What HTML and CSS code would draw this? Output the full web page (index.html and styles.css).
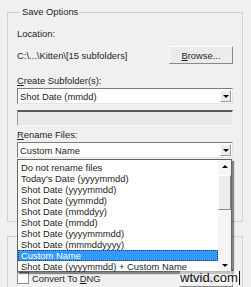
FILE: index.html
```html
<!DOCTYPE html>
<html lang="en">
<head>
    <meta charset="UTF-8">
    <title>Save Options</title>
    <link rel="stylesheet" href="styles.css">
</head>
<body>
    <fieldset class="group save-group">
        <legend>Save Options</legend>
        <div class="label loc-label">Location:</div>
        <div class="path-row">
            <span class="path">C:\...\Kitten\[15 subfolders]</span>
            <button class="btn browse"><u>B</u>rowse...</button>
        </div>
        <div class="label sub-label"><u>C</u>reate Subfolder(s):</div>
        <div class="combo">
            <span class="combo-text">Shot Date (mmdd)</span>
            <span class="combo-arrow"><span class="tri-down"></span></span>
        </div>
        <div class="disabled-box"></div>
        <div class="label rename-label"><u>R</u>ename Files:</div>
        <div class="combo rename-combo">
            <span class="combo-text">Custom Name</span>
            <span class="combo-arrow"><span class="tri-down"></span></span>
        </div>
    </fieldset>

    <fieldset class="group convert-group">
        <legend class="empty-legend"></legend>
        <div class="check-row">
            <span class="checkbox"></span>
            <span class="check-label">Convert To <u>D</u>NG</span>
            <button class="btn settings">Settings...</button>
        </div>
    </fieldset>

    <div class="droplist">
        <div class="items">
            <div class="item">Do not rename files</div>
            <div class="item">Today's Date (yyyymmdd)</div>
            <div class="item">Shot Date (yyyymmdd)</div>
            <div class="item">Shot Date (yymmdd)</div>
            <div class="item">Shot Date (mmddyy)</div>
            <div class="item">Shot Date (mmdd)</div>
            <div class="item">Shot Date (yyyymmmdd)</div>
            <div class="item">Shot Date (mmmddyyyy)</div>
            <div class="item selected">Custom Name</div>
            <div class="item">Shot Date (yyyymmdd) + Custom Name</div>
        </div>
        <div class="scrollbar">
            <span class="sb-btn"><span class="tri-up"></span></span>
            <span class="sb-thumb"></span>
            <span class="sb-track"></span>
            <span class="sb-btn"><span class="tri-down"></span></span>
        </div>
    </div>

    <span class="watermark">wtvid.com</span>
</body>
</html>
```

FILE: styles.css
```css
body {
    margin: 0;
    background-color: #f0f0f0;
    font-family: "Liberation Sans", Arial, sans-serif;
    font-size: 9.4px;
    color: #1e1e1e;
    width: 251px;
    height: 287px;
    overflow: hidden;
    position: relative;
}
.group {
    margin: 0 0 0 7px;
    width: 236px;
    box-sizing: border-box;
    border: 1px solid #d3d3d3;
    padding: 0 9px;
}
.group legend {
    padding: 0 2px;
    margin-left: 3px;
    line-height: 12px;
}
.empty-legend {
    width: 6px;
    height: 12px;
}
.save-group {
    margin-top: 6px;
    height: 216px;
}
.label {
    line-height: 13px;
}
.loc-label {
    margin-top: 9px;
}
.path-row {
    display: flex;
    align-items: center;
    justify-content: space-between;
    margin-top: 6px;
    height: 18px;
}
.btn {
    font-family: inherit;
    font-size: inherit;
    color: #1e1e1e;
    background: #ebebeb;
    border: 1px solid;
    border-color: #fcfcfc #8a8a8a #8a8a8a #fcfcfc;
    padding: 0;
}
.browse {
    width: 64px;
    height: 18px;
}
.sub-label {
    margin-top: 10px;
}
.combo {
    display: flex;
    align-items: center;
    justify-content: space-between;
    margin-top: 1px;
    height: 16px;
    box-sizing: border-box;
    background: #fff;
    border: 1px solid;
    border-color: #7c7c7c #e3e3e3 #e3e3e3 #7c7c7c;
    padding: 0 1px 0 2px;
}
.combo-arrow {
    display: flex;
    align-items: center;
    justify-content: center;
    width: 11px;
    height: 12px;
    box-sizing: border-box;
    background: #ececec;
    border: 1px solid;
    border-color: #fff #9a9a9a #9a9a9a #fff;
}
.tri-down {
    width: 0;
    height: 0;
    border-left: 3px solid transparent;
    border-right: 3px solid transparent;
    border-top: 3px solid #000;
}
.tri-up {
    width: 0;
    height: 0;
    border-left: 3px solid transparent;
    border-right: 3px solid transparent;
    border-bottom: 3px solid #000;
}
.disabled-box {
    margin-top: 6px;
    height: 16px;
    box-sizing: border-box;
    background: #e9e9e9;
    border: 1px solid;
    border-color: #5a5a5a #f4f4f4 #f4f4f4 #9a9a9a;
    border-top-width: 2px;
}
.rename-label {
    margin-top: 2px;
}
.convert-group {
    margin-top: 8px;
    height: 57px;
    border-bottom: none;
}
.check-row {
    display: flex;
    align-items: center;
    margin-top: 29px;
    height: 14px;
}
.checkbox {
    width: 12px;
    height: 12px;
    box-sizing: border-box;
    background: #fff;
    border: 1px solid #8e8f8f;
}
.check-label {
    margin-left: 3px;
    flex: 1;
}
.settings {
    width: 54px;
    height: 18px;
    color: #777;
}

/* open dropdown of the rename combo */
.droplist {
    position: absolute;
    left: 17px;
    top: 159px;
    width: 215px;
    height: 113px;
    box-sizing: border-box;
    background: #fff;
    border: 1px solid #646464;
    box-shadow: 2px 2px 1px rgba(0, 0, 0, 0.45);
    display: flex;
}
.items {
    flex: 1;
    padding-top: 2px;
}
.item {
    height: 11px;
    line-height: 11px;
    padding-left: 3px;
    box-sizing: border-box;
    white-space: nowrap;
}
.item.selected {
    background: #3399ff;
    color: #fff;
    outline: 1px dotted #1d3f6e;
    outline-offset: -1px;
}
.scrollbar {
    width: 13px;
    display: flex;
    flex-direction: column;
    background: #f5f5f5;
}
.sb-btn {
    height: 12px;
    display: flex;
    align-items: center;
    justify-content: center;
}
.sb-thumb {
    margin-top: 3px;
    height: 35px;
    box-sizing: border-box;
    background: #ededed;
    border: 1px solid;
    border-color: #fff #8a8a8a #8a8a8a #fff;
}
.sb-track {
    flex: 1;
}
.watermark {
    position: absolute;
    left: 180px;
    top: 271px;
    font-family: "Liberation Sans", Arial, sans-serif;
    font-size: 13px;
    color: #111;
    background: rgba(255, 255, 255, 0.55);
    border-right: 1px solid #000;
    padding-right: 1px;
    line-height: 14px;
}
```
